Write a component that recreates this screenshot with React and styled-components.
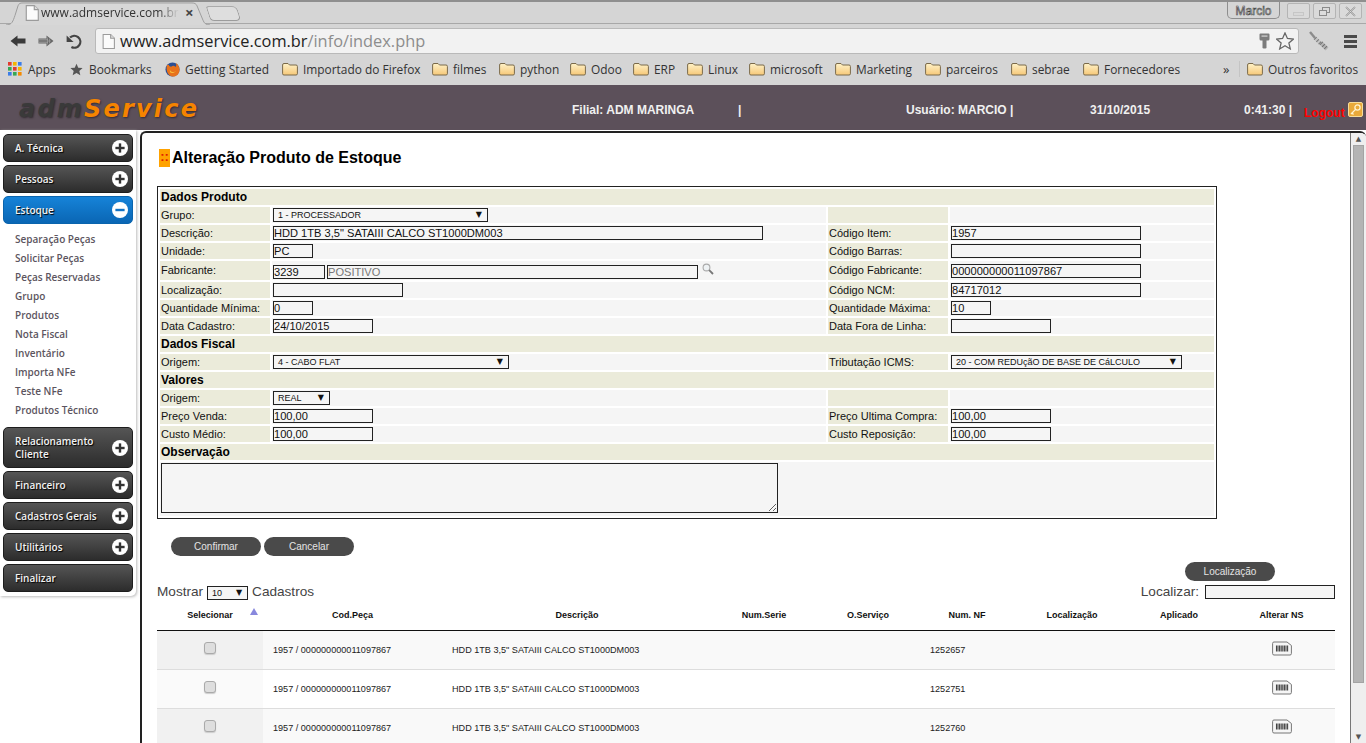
import React from "react";
import styled, { createGlobalStyle } from "styled-components";

const GlobalStyle = createGlobalStyle`
  html, body { margin: 0; padding: 0; background: #fff; }
  body { font-family: "Liberation Sans", Arial, sans-serif; overflow: hidden; }
  * { box-sizing: border-box; }
`;

const BackIcon = () => (
  <svg width="16" height="12" viewBox="0 0 16 12">
    <path d="M.5 6 L7.5 .5 V3.5 H15.5 V8.5 H7.5 V11.5 Z" fill="#3a3a3a" />
  </svg>
);
const ForwardIcon = () => (
  <svg width="16" height="12" viewBox="0 0 16 12">
    <path d="M15.5 6 L8.5 .5 V3.5 H.5 V8.5 H8.5 V11.5 Z" fill="#666" />
    <path d="M1 4.5 H10 M1 6 H13 M1 7.5 H10 M9.5 2.5 V9.5 M11.5 3.5 V8.5" stroke="#a8a8a8" strokeWidth=".6" />
  </svg>
);
const ReloadIcon = () => (
  <svg width="16" height="16" viewBox="0 0 16 16">
    <path d="M5.4 14 A6 6 0 1 0 4 4.6" fill="none" stroke="#444" strokeWidth="2.2" />
    <path d="M.6 2.6 L7.6 9 H.6 Z" fill="#444" />
  </svg>
);
const PageIcon = ({ size = 14 }) => (
  <svg width={size - 2} height={size} viewBox="0 0 12 14">
    <path d="M1 .5 H8 L11.5 4 V13.5 H1 Z" fill="#fbfbfb" stroke="#9b9b9b" />
    <path d="M8 .5 V4 H11.5" fill="#ddd" stroke="#9b9b9b" />
  </svg>
);
const FolderIcon = () => (
  <svg width="16" height="14" viewBox="0 0 16 14">
    <defs>
      <linearGradient id="folderFill" x1="0" y1="0" x2="0" y2="1">
        <stop offset="0" stopColor="#fff2c8" />
        <stop offset="1" stopColor="#f6c878" />
      </linearGradient>
    </defs>
    <path d="M.6 3 Q.6 1.5 2 1.5 H6 L7.5 3 H14 Q15.4 3 15.4 4.4 V11.8 Q15.4 13 14 13 H2 Q.6 13 .6 11.8 Z" fill="url(#folderFill)" stroke="#7a6a4a" />
  </svg>
);
const AppsIcon = () => {
  const colors = ["#e33b2e", "#f5b400", "#3a7de8", "#36a852", "#e33b2e", "#f5b400", "#3a7de8", "#36a852", "#f58a00"];
  return (
    <svg width="14" height="14" viewBox="0 0 14 14">
      {colors.map((c, i) => (
        <rect key={i} x={(i % 3) * 5} y={Math.floor(i / 3) * 5} width="3.6" height="3.6" fill={c} />
      ))}
    </svg>
  );
};
const StarIcon = ({ size = 13, fill = "#555", stroke = "none" }) => (
  <svg width={size} height={size} viewBox="0 0 20 20">
    <path d="M10 1 L12.7 7.2 L19.4 7.8 L14.3 12.2 L15.9 18.8 L10 15.3 L4.1 18.8 L5.7 12.2 L.6 7.8 L7.3 7.2 Z" fill={fill} stroke={stroke} strokeWidth="1.4" />
  </svg>
);
const FirefoxIcon = () => (
  <svg width="15" height="15" viewBox="0 0 16 16">
    <circle cx="8" cy="8" r="7.5" fill="#2c4f94" />
    <path d="M2 3.5 C1 8 2.5 15.5 8.5 15.5 C13 15.5 15.6 12 15.5 8 C15.4 5 13.5 2 11.5 1 C12.5 3 12 4.5 11 5.2 C10 3.5 8 4 6.5 5 C5.5 5 4.5 4.5 4 3 C3.2 3.4 2.6 3.4 2 3.5 Z" fill="#e8721c" />
    <path d="M5 8 C6 11 10 12 12 9 C11 11 7.5 13 5.5 11 Z" fill="#f8c43c" />
  </svg>
);
const KeyIcon = () => (
  <svg width="11" height="16" viewBox="0 0 11 16">
    <path d="M1.5 .5 H9.5 Q10.5 .5 10.5 1.5 V6 Q10.5 7.5 9 7.5 H7.5 V15 Q5.5 16 3.5 15 V7.5 H2 Q.5 7.5 .5 6 V1.5 Q.5 .5 1.5 .5 Z" fill="#7c7c7c" />
    <rect x="2.5" y="2.4" width="6" height="1.4" fill="#c8c8c8" />
  </svg>
);
const WrenchIcon = () => (
  <svg width="22" height="20" viewBox="0 0 22 20">
    <path d="M2 1 L7 7" stroke="#8c8c8c" strokeWidth="2.4" />
    <path d="M7 7 L13 13" stroke="#c4c4c4" strokeWidth="3.6" />
    <path d="M7 7 L13 13" stroke="#777" strokeWidth="3.6" strokeDasharray="1 2.2" />
    <path d="M13 12 L19 18" stroke="#b4b4b4" strokeWidth="4" />
    <path d="M13 12 L19 18" stroke="#707070" strokeWidth="4" strokeDasharray="1 2" />
  </svg>
);
const SearchIcon = () => (
  <svg width="12" height="12" viewBox="0 0 12 12">
    <circle cx="4.5" cy="4.5" r="3.4" fill="#eef2f4" stroke="#aaa" strokeWidth="1.1" />
    <path d="M7.2 7.2 L11 11" stroke="#777" strokeWidth="1.8" />
  </svg>
);
const BarcodeIcon = () => (
  <svg width="20" height="15" viewBox="0 0 20 15">
    <path d="M2 1 H15 L19.4 4.5 V12.5 Q19.4 14 18 14 H2 Q.6 14 .6 12.5 V2.4 Q.6 1 2 1 Z" fill="#f6f6f6" stroke="#777" strokeWidth="1" />
    <path d="M4.5 4.5 V10.5 M6 4.5 V10.5 M7.6 4.5 V10.5 M9.2 4.5 V10.5 M10.8 4.5 V10.5 M12.4 4.5 V10.5 M14 4.5 V10.5 M15.6 4.5 V10.5" stroke="#444" strokeWidth="1.1" />
  </svg>
);
const LogoutIcon = () => (
  <svg width="15" height="15" viewBox="0 0 15 15">
    <rect x=".5" y=".5" width="14" height="14" rx="1.5" fill="#e9a93a" stroke="#f6dc9a" />
    <circle cx="9.5" cy="5.5" r="2.6" fill="none" stroke="#fff3cf" strokeWidth="1.3" />
    <path d="M7.6 7.4 L3 12 M4 11 L5.5 12.5" stroke="#fff3cf" strokeWidth="1.3" />
  </svg>
);
const RoundPlus = ({ open }) => (
  <svg width="16" height="16" viewBox="0 0 16 16">
    <circle cx="8" cy="8" r="8" fill="#fff" />
    <rect x="3.4" y="6.8" width="9.2" height="2.4" fill={open ? "#1272c4" : "#333"} />
    {!open && <rect x="6.8" y="3.4" width="2.4" height="9.2" fill="#333" />}
  </svg>
);
const MinimizeGlyph = () => (
  <svg width="11" height="11" viewBox="0 0 11 11">
    <rect x="0" y="7" width="11" height="2" fill="#f2f2f2" stroke="#9a9a9a" strokeWidth=".6" />
  </svg>
);
const RestoreGlyph = () => (
  <svg width="11" height="11" viewBox="0 0 11 11">
    <rect x="3.5" y="1.5" width="7" height="5" fill="none" stroke="#8a8a8a" />
    <rect x=".5" y="4.5" width="7" height="5" fill="#dcdcdc" stroke="#8a8a8a" />
  </svg>
);
const CloseGlyph = () => (
  <svg width="11" height="11" viewBox="0 0 11 11">
    <path d="M1 1 L10 10 M10 1 L1 10" stroke="#8a8a8a" strokeWidth="1.6" />
    <path d="M1 1 L10 10 M10 1 L1 10" stroke="#f4f4f4" strokeWidth=".5" />
  </svg>
);

const folderMarks = [
  ["Importado do Firefox", 150],
  ["filmes", 67],
  ["python", 71],
  ["Odoo", 63],
  ["ERP", 54],
  ["Linux", 62],
  ["microsoft", 86],
  ["Marketing", 90],
  ["parceiros", 86],
  ["sebrae", 72],
  ["Fornecedores", 140],
];
const bookmarks = [
  { label: "Apps", icon: <AppsIcon />, gap: 6, width: 62 },
  { label: "Bookmarks", icon: <StarIcon />, gap: 6, width: 95 },
  { label: "Getting Started", icon: <FirefoxIcon />, gap: 5, width: 117 },
  ...folderMarks.map(([label, width]) => ({ label, width, icon: <FolderIcon />, gap: 5 })),
];

const menuTop = [
  { label: "A. Técnica" },
  { label: "Pessoas" },
];
const menuBottom = [
  { label: <>Relacionamento<br />Cliente</>, tall: true },
  { label: "Financeiro" },
  { label: "Cadastros Gerais" },
  { label: "Utilitários" },
  { label: "Finalizar", noIcon: true },
];
const subItems = ["Separação Peças", "Solicitar Peças", "Peças Reservadas", "Grupo", "Produtos", "Nota Fiscal", "Inventário", "Importa NFe", "Teste NFe", "Produtos Técnico"];

const columns = [
  { title: "Selecionar", width: 106 },
  { title: "Cod.Peça", width: 179 },
  { title: "Descrição", width: 270 },
  { title: "Num.Serie", width: 104 },
  { title: "O.Serviço", width: 104 },
  { title: "Num. NF", width: 94 },
  { title: "Localização", width: 116 },
  { title: "Aplicado", width: 98 },
  { title: "Alterar NS", width: 107 },
];
const stock = ["1252657", "1252751", "1252760"];

export default function App() {
  return (
    <Page>
      <GlobalStyle />
      <BrowserChrome>
        <TabStrip>
          <Tab>
            <TabShape viewBox="0 0 204 24" preserveAspectRatio="none">
              <path d="M0 24 C6 24 7 20 9 14 L12 4 C13 1.5 14 1 17 1 H186 C189 1 190 2 191 4 L197 19 C198 22 200 24 204 24" fill="#d7d7d7" stroke="#9c9c9c" />
            </TabShape>
            <PageIcon size={16} />
            <TabTitle>www.admservice.com.br</TabTitle>
            <TabClose>×</TabClose>
          </Tab>
          <NewTab />
          <WindowControls>
            <UserBadge>Marcio</UserBadge>
            <WindowButton><MinimizeGlyph /></WindowButton>
            <WindowButton><RestoreGlyph /></WindowButton>
            <WindowButton><CloseGlyph /></WindowButton>
          </WindowControls>
        </TabStrip>
        <Toolbar>
          <NavIcons>
            <BackIcon />
            <ForwardIcon />
            <ReloadIcon />
          </NavIcons>
          <UrlField>
            <PageIcon size={15} />
            <UrlText>
              www.admservice.com.br<UrlPath>/info/index.php</UrlPath>
            </UrlText>
            <UrlActions>
              <KeyIcon />
              <StarIcon size={18} fill="#f4f4f4" stroke="#666" />
            </UrlActions>
          </UrlField>
          <WrenchSlot>
            <WrenchIcon />
          </WrenchSlot>
          <MenuBars>
            <i /><i /><i />
          </MenuBars>
        </Toolbar>
        <BookmarkBar>
          {bookmarks.map((b) => (
            <Bookmark key={b.label} $gap={b.gap} $w={b.width}>
              {b.icon}
              <span>{b.label}</span>
            </Bookmark>
          ))}
          <Overflow>»</Overflow>
          <Bookmark $gap={5} $other>
            <FolderIcon />
            <span>Outros favoritos</span>
          </Bookmark>
        </BookmarkBar>
      </BrowserChrome>

      <AppHeader>
        <Logo>adm<LogoAccent>Service</LogoAccent></Logo>
        <HeaderInfo $width={166}>Filial: ADM MARINGA</HeaderInfo>
        <HeaderInfo $width={168}>|</HeaderInfo>
        <HeaderInfo $width={184}>Usuário: MARCIO |</HeaderInfo>
        <HeaderInfo $width={154}>31/10/2015</HeaderInfo>
        <HeaderInfo $width={60}>0:41:30 |</HeaderInfo>
        <LogoutLink>Logout</LogoutLink>
        <LogoutIcon />
      </AppHeader>

      <Body>
        <SideColumn>
          <SidePanel>
            {menuTop.map((m) => (
              <MenuButton key={m.label}>
                <span>{m.label}</span>
                <RoundPlus />
              </MenuButton>
            ))}
            <MenuButton $active>
              <span>Estoque</span>
              <RoundPlus open />
            </MenuButton>
            <SubMenu>
              {subItems.map((s) => (
                <SubItem key={s}>{s}</SubItem>
              ))}
            </SubMenu>
            {menuBottom.map((m, i) => (
              <MenuButton key={i} $tall={m.tall}>
                <span>{m.label}</span>
                {!m.noIcon && <RoundPlus />}
              </MenuButton>
            ))}
          </SidePanel>
        </SideColumn>

        <Main>
          <Content>
            <TitleRow>
              <TitleBadge>::</TitleBadge>
              <Title>Alteração Produto de Estoque</Title>
            </TitleRow>

            <FormTable>
              <colgroup>
                <col width="110" />
                <col width="554" />
                <col width="120" />
                <col width="264" />
              </colgroup>
              <tbody>
                <SectionRow title="Dados Produto" />
                <FormRow label="Grupo:" blankRight>
                  <FakeSelect $w={215}>1 - PROCESSADOR<Caret>▼</Caret></FakeSelect>
                </FormRow>
                <FormRow label="Descrição:" right="Código Item:" rightField={<Field $w={190} defaultValue="1957" />}>
                  <Field $w={490} defaultValue={'HDD 1TB 3,5" SATAIII CALCO ST1000DM003'} />
                </FormRow>
                <FormRow label="Unidade:" right="Código Barras:" rightField={<Field $w={190} />}>
                  <Field $w={40} defaultValue="PC" />
                </FormRow>
                <FormRow label="Fabricante:" tall right="Código Fabricante:" rightField={<Field $w={190} defaultValue="000000000011097867" />}>
                  <InlineFields>
                    <Field $w={52} defaultValue="3239" />
                    <Field $w={371} $muted defaultValue="POSITIVO" />
                    <SearchSlot><SearchIcon /></SearchSlot>
                  </InlineFields>
                </FormRow>
                <FormRow label="Localização:" right="Código NCM:" rightField={<Field $w={190} defaultValue="84717012" />}>
                  <Field $w={130} />
                </FormRow>
                <FormRow label="Quantidade Mínima:" right="Quantidade Máxima:" rightField={<Field $w={40} defaultValue="10" />}>
                  <Field $w={40} defaultValue="0" />
                </FormRow>
                <FormRow label="Data Cadastro:" right="Data Fora de Linha:" rightField={<Field $w={100} />}>
                  <Field $w={100} defaultValue="24/10/2015" />
                </FormRow>
                <SectionRow title="Dados Fiscal" />
                <FormRow
                  label="Origem:"
                  right="Tributação ICMS:"
                  rightField={<FakeSelect $w={231}>20 - COM REDUçãO DE BASE DE CáLCULO<Caret>▼</Caret></FakeSelect>}
                >
                  <FakeSelect $w={236}>4 - CABO FLAT<Caret>▼</Caret></FakeSelect>
                </FormRow>
                <SectionRow title="Valores" />
                <FormRow label="Origem:" blankRight>
                  <FakeSelect $w={57}>REAL<Caret>▼</Caret></FakeSelect>
                </FormRow>
                <FormRow label="Preço Venda:" right="Preço Ultima Compra:" rightField={<Field $w={100} defaultValue="100,00" />}>
                  <Field $w={100} defaultValue="100,00" />
                </FormRow>
                <FormRow label="Custo Médio:" right="Custo Reposição:" rightField={<Field $w={100} defaultValue="100,00" />}>
                  <Field $w={100} defaultValue="100,00" />
                </FormRow>
                <SectionRow title="Observação" />
                <tr>
                  <TextAreaCell colSpan={4}>
                    <Notes />
                  </TextAreaCell>
                </tr>
              </tbody>
            </FormTable>

            <FormActions>
              <PillButton>Confirmar</PillButton>
              <PillButton>Cancelar</PillButton>
            </FormActions>

            <SearchAction>
              <PillButton>Localização</PillButton>
            </SearchAction>

            <ListControls>
              <ControlLabel>
                Mostrar
                <LengthSelect>10<Caret>▼</Caret></LengthSelect>
                Cadastros
              </ControlLabel>
              <ControlLabel>
                Localizar:
                <FilterInput />
              </ControlLabel>
            </ListControls>

            <ListTable>
              <colgroup>
                {columns.map((c) => (
                  <col key={c.title} width={c.width} />
                ))}
              </colgroup>
              <thead>
                <tr>
                  {columns.map((c, i) => (
                    <HeadCell key={c.title} $sorted={i === 0}>{c.title}</HeadCell>
                  ))}
                </tr>
              </thead>
              <tbody>
                {stock.map((nf, i) => (
                  <ListRow key={nf} $odd={i % 2 === 0}>
                    <SortedCell $odd={i % 2 === 0}><RowCheck /></SortedCell>
                    <DataCell>1957 / 000000000011097867</DataCell>
                    <DataCell>HDD 1TB 3,5" SATAIII CALCO ST1000DM003</DataCell>
                    <DataCell />
                    <DataCell />
                    <DataCell>{nf}</DataCell>
                    <DataCell />
                    <DataCell />
                    <IconCell><BarcodeIcon /></IconCell>
                  </ListRow>
                ))}
              </tbody>
            </ListTable>
          </Content>
          <Scrollbar>
            <ScrollArrow>▲</ScrollArrow>
            <ScrollTrack><ScrollThumb /></ScrollTrack>
            <ScrollArrow>▼</ScrollArrow>
          </Scrollbar>
        </Main>
      </Body>
    </Page>
  );
}

const SectionRow = ({ title }) => (
  <tr>
    <SectionCell colSpan={4}>{title}</SectionCell>
  </tr>
);

const FormRow = ({ label, tall, right, rightField, blankRight, children }) => (
  <FormTr $tall={tall}>
    <LabelCell $tall={tall}>{label}</LabelCell>
    <ValueCell>{children}</ValueCell>
    <LabelCell $tall={tall}>{blankRight ? "" : right}</LabelCell>
    <ValueCell>{blankRight ? null : rightField}</ValueCell>
  </FormTr>
);

const Page = styled.div`
  width: 1366px;
  height: 743px;
  display: flex;
  flex-direction: column;
  overflow: hidden;
  background: #fff;
`;

const BrowserChrome = styled.div`
  height: 85px;
  background: #d5d5d5;
  border-top: 2px solid #8f8f8f;
  font-family: "Open Sans", sans-serif;
  color: #333;
`;

const TabStrip = styled.div`
  height: 22px;
  display: flex;
  align-items: flex-start;
  padding-left: 6px;
  border-bottom: 1px solid #a8a8a8;
`;

const Tab = styled.div`
  position: relative;
  width: 204px;
  height: 23px;
  flex: none;
  display: flex;
  align-items: center;
  gap: 2px;
  padding: 0 0 2px 19px;
  z-index: 1;
`;

const TabShape = styled.svg`
  position: absolute;
  inset: 0;
  width: 100%;
  height: 100%;
  z-index: -1;
`;

const TabTitle = styled.span`
  width: 138px;
  flex: none;
  overflow: hidden;
  white-space: nowrap;
  font-size: 12px;
  color: #333;
  -webkit-mask-image: linear-gradient(to right, #000 85%, transparent);
  mask-image: linear-gradient(to right, #000 85%, transparent);
`;

const TabClose = styled.span`
  font-size: 15px;
  font-weight: 700;
  color: #444;
  margin-left: 4px;
  line-height: 1;
`;

const NewTab = styled.div`
  width: 31px;
  height: 15px;
  margin: 4px 0 0 -2px;
  background: #dedede;
  border: 1px solid #9c9c9c;
  border-top-color: #aaa;
  border-radius: 3px 5px 5px 4px;
  transform: skewX(18deg);
`;

const WindowControls = styled.div`
  margin-left: auto;
  display: flex;
  align-items: flex-start;
  gap: 3px;
  padding-right: 4px;
`;

const UserBadge = styled.div`
  width: 53px;
  height: 17px;
  margin-right: 4px;
  border: 1px solid #8e8e8e;
  border-top: none;
  border-radius: 0 0 5px 5px;
  text-align: center;
  font: 12px/18px "Liberation Sans", sans-serif;
  color: #ececec;
  -webkit-text-stroke: .6px #444;
`;

const WindowButton = styled.div`
  width: 23px;
  height: 16px;
  margin-top: 1px;
  display: flex;
  align-items: center;
  justify-content: center;
  border: 1px solid #b4b4b4;
  border-radius: 2px;
  background: #dadada;
`;

const Toolbar = styled.div`
  height: 33px;
  display: flex;
  align-items: center;
  padding: 1px 0 0 10px;
`;

const NavIcons = styled.div`
  width: 85px;
  flex: none;
  display: flex;
  align-items: center;
  gap: 12px;
`;

const UrlField = styled.div`
  width: 1204px;
  height: 26px;
  flex: none;
  display: flex;
  align-items: center;
  gap: 5px;
  padding: 0 4px 0 6px;
  background: #f2f2f2;
  border: 1px solid #b9b9b9;
  border-radius: 3px;
`;

const UrlText = styled.div`
  font-size: 16.35px;
  color: #222;
  white-space: nowrap;
`;

const UrlPath = styled.span`
  color: #8d8d8d;
`;

const UrlActions = styled.div`
  margin-left: auto;
  display: flex;
  align-items: center;
  gap: 6px;
`;

const WrenchSlot = styled.div`
  width: 22px;
  flex: none;
  margin-left: 9px;
  display: flex;
`;

const MenuBars = styled.div`
  width: 13px;
  flex: none;
  margin-left: 14px;
  display: flex;
  flex-direction: column;
  gap: 2px;
  i {
    display: block;
    height: 3px;
    background: #4a4a4a;
  }
`;

const BookmarkBar = styled.div`
  height: 28px;
  display: flex;
  align-items: center;
  padding: 0 0 4px 8px;
`;

const Bookmark = styled.div`
  ${(p) => p.$w && `width: ${p.$w}px;`}
  flex: none;
  display: flex;
  align-items: center;
  gap: ${(p) => p.$gap}px;
  font-size: 11.9px;
  color: #333;
  white-space: nowrap;
  ${(p) => p.$other && `border-left: 1px solid #c4c4c4; padding-left: 7px;`}
`;

const Overflow = styled.span`
  width: 16px;
  flex: none;
  font-size: 13px;
`;

const AppHeader = styled.header`
  height: 45px;
  flex: none;
  display: flex;
  align-items: center;
  padding-top: 4px;
  background: #5c505a;
  color: #f0f0f0;
`;

const Logo = styled.div`
  width: 572px;
  flex: none;
  margin-top: -2px;
  padding-left: 19px;
  font: italic 700 24px "DejaVu Sans", sans-serif;
  letter-spacing: 2.2px;
  color: #3a3a3a;
  text-shadow: 1px 1px 2px #332c32;
`;

const LogoAccent = styled.span`
  color: #f58400;
`;

const HeaderInfo = styled.div`
  width: ${(p) => p.$width}px;
  flex: none;
  font-size: 12px;
  font-weight: 700;
  white-space: nowrap;
`;

const LogoutLink = styled.div`
  margin: 6px 3px 0 0;
  font-size: 12px;
  font-weight: 700;
  color: #f00;
`;

const Body = styled.div`
  flex: 1;
  min-height: 0;
  display: flex;
`;

const SideColumn = styled.aside`
  width: 140px;
  flex: none;
`;

const SidePanel = styled.nav`
  width: 136px;
  height: 466px;
  padding: 4px 3px 0;
  display: flex;
  flex-direction: column;
  gap: 3px;
  background: #fff;
  border-radius: 0 0 5px 0;
  box-shadow: 1px 1px 3px #bbb;
`;

const MenuButton = styled.div`
  height: ${(p) => (p.$tall ? 41 : 28)}px;
  flex: none;
  display: flex;
  align-items: center;
  justify-content: space-between;
  padding: 0 4px 0 11px;
  border-radius: 5px;
  font: 600 10px/13px "Open Sans", sans-serif;
  color: #f2f2f2;
  text-shadow: 1px 1px 1px #000;
  border: 1px solid ${(p) => (p.$active ? "#0a64ad" : "#1d1d1d")};
  background: ${(p) => (p.$active ? "linear-gradient(#1683d8, #0a66b4)" : "linear-gradient(#555, #2c2c2c)")};
  svg { flex: none; }
`;

const SubMenu = styled.ul`
  list-style: none;
  margin: 3px 0 4px;
  padding: 0 0 0 12px;
`;

const SubItem = styled.li`
  height: 19px;
  font: 600 10px/19px "Open Sans", sans-serif;
  color: #5c5560;
  white-space: nowrap;
`;

const Main = styled.main`
  flex: 1;
  min-width: 0;
  display: flex;
  margin-top: 1px;
  border: 2px solid #222;
  border-right: none;
  border-bottom: none;
  border-radius: 6px 6px 0 0;
  overflow: hidden;
`;

const Content = styled.div`
  flex: 1;
  min-width: 0;
  padding: 14px 15px 0 15px;
  overflow: hidden;
  border-right: 1px solid #777;
`;

const Scrollbar = styled.div`
  width: 15px;
  flex: none;
  display: flex;
  flex-direction: column;
  background: #efefef;
`;

const ScrollArrow = styled.div`
  height: 12px;
  font: 7px/12px "DejaVu Sans", sans-serif;
  text-align: center;
  color: #555;
`;

const ScrollTrack = styled.div`
  flex: 1;
  padding: 0 2px;
`;

const ScrollThumb = styled.div`
  height: 538px;
  background: #b4b4b4;
  border: 1px solid #a4a4a4;
`;

const TitleRow = styled.div`
  height: 21px;
  display: flex;
  align-items: center;
  gap: 2px;
  padding-left: 2px;
`;

const TitleBadge = styled.span`
  width: 11px;
  height: 18px;
  background: #ffa200;
  color: #e02000;
  text-align: center;
  font: 700 13px/16px "Liberation Sans", sans-serif;
`;

const Title = styled.h1`
  margin: 0;
  font-size: 16px;
  font-weight: 700;
  color: #000;
  white-space: nowrap;
`;

const FormTable = styled.table`
  width: 1060px;
  margin-top: 18px;
  table-layout: fixed;
  border: 1px solid #222;
  border-spacing: 2px;
  font-size: 11px;
  color: #111;
`;

const SectionCell = styled.td`
  height: 16px;
  padding: 0 0 0 1px;
  background: #ebebda;
  font-size: 12px;
  font-weight: 700;
  color: #000;
`;

const FormTr = styled.tr`
  height: ${(p) => (p.$tall ? 19 : 16)}px;
`;

const LabelCell = styled.td`
  padding: 0 0 ${(p) => (p.$tall ? 2 : 0)}px 1px;
  background: #ebebda;
  white-space: nowrap;
`;

const ValueCell = styled.td`
  padding: 0 0 0 1px;
  background: #f5f5f5;
  vertical-align: middle;
`;

const Field = styled.input`
  display: block;
  width: ${(p) => p.$w}px;
  height: 14px;
  padding: 0;
  border: 1px solid #222;
  border-radius: 0;
  background: #f5f5f5;
  font: 11.1px "Liberation Sans", sans-serif;
  color: ${(p) => (p.$muted ? "#777" : "#111")};
  outline: none;
`;

const InlineFields = styled.div`
  display: flex;
  gap: 2px;
  margin-top: 3px;
`;

const SearchSlot = styled.span`
  margin: -2px 0 0 2px;
`;

const FakeSelect = styled.div`
  position: relative;
  width: ${(p) => p.$w}px;
  height: 14px;
  padding-left: 4px;
  border: 1px solid #222;
  background: #f5f5f5;
  font-size: 9px;
  line-height: 12px;
  white-space: nowrap;
`;

const Caret = styled.span`
  position: absolute;
  right: 5px;
  top: 0;
  font: 8px/12px "DejaVu Sans", sans-serif;
  color: #111;
`;

const TextAreaCell = styled.td`
  height: 54px;
  padding: 1px 0 0 1px;
  background: #f5f5f5;
  vertical-align: top;
`;

const Notes = styled.textarea`
  display: block;
  width: 617px;
  height: 50px;
  border: 1px solid #222;
  border-radius: 0;
  background: #f5f5f5;
`;

const FormActions = styled.div`
  display: flex;
  gap: 3px;
  margin: 18px 0 0 14px;
`;

const SearchAction = styled.div`
  display: flex;
  justify-content: flex-end;
  margin-top: 6px;
  padding-right: 60px;
`;

const PillButton = styled.button`
  width: 90px;
  height: 19px;
  padding: 0;
  border: none;
  border-radius: 10px;
  background: #4a4a4a;
  color: #e4e4e4;
  font: 10px "Liberation Sans", sans-serif;
`;

const ListControls = styled.div`
  display: flex;
  justify-content: space-between;
  align-items: center;
  height: 18px;
  margin: 2px 0 -1px;
`;

const ControlLabel = styled.div`
  display: flex;
  align-items: center;
  gap: 4px;
  padding-bottom: 2px;
  font-size: 13.6px;
  color: #444;
`;

const LengthSelect = styled.div`
  position: relative;
  width: 41px;
  height: 14px;
  margin-top: 4px;
  padding-left: 4px;
  border: 1px solid #222;
  background: #f5f5f5;
  font-size: 9px;
  line-height: 13px;
  color: #111;
`;

const FilterInput = styled.input`
  width: 130px;
  height: 14px;
  margin: 2px 0 0 2px;
  border: 1px solid #222;
  border-radius: 0;
  background: #f5f5f5;
  padding: 0;
`;

const ListTable = styled.table`
  width: 1178px;
  table-layout: fixed;
  border-collapse: collapse;
`;

const HeadCell = styled.th`
  position: relative;
  height: 30px;
  padding: 0;
  border-bottom: 1px solid #111;
  font-size: 9px;
  font-weight: 700;
  color: #111;
  text-align: center;
  ${(p) =>
    p.$sorted &&
    `&::after {
      content: "";
      position: absolute;
      left: 93px;
      top: 8px;
      border-left: 4px solid transparent;
      border-right: 4px solid transparent;
      border-bottom: 7px solid #8888dd;
    }`}
`;

const ListRow = styled.tr`
  height: 39px;
  background: ${(p) => (p.$odd ? "#f9f9f9" : "#fff")};
  border-bottom: 1px solid #ddd;
`;

const SortedCell = styled.td`
  padding: 0;
  text-align: center;
  background: ${(p) => (p.$odd ? "#f1f1f1" : "#fafafa")};
`;

const RowCheck = styled.span`
  display: block;
  width: 12px;
  height: 12px;
  margin: -4px auto 0 47px;
  border: 1px solid #aaa;
  border-radius: 3px;
  background: #dedede;
  box-shadow: 0 1px 1px #ccc;
`;

const DataCell = styled.td`
  padding: 0 0 0 10px;
  font-size: 9.1px;
  color: #222;
  white-space: nowrap;
`;

const IconCell = styled.td`
  padding: 0 0 3px 0;
  text-align: center;
  svg { display: inline-block; vertical-align: middle; }
`;
